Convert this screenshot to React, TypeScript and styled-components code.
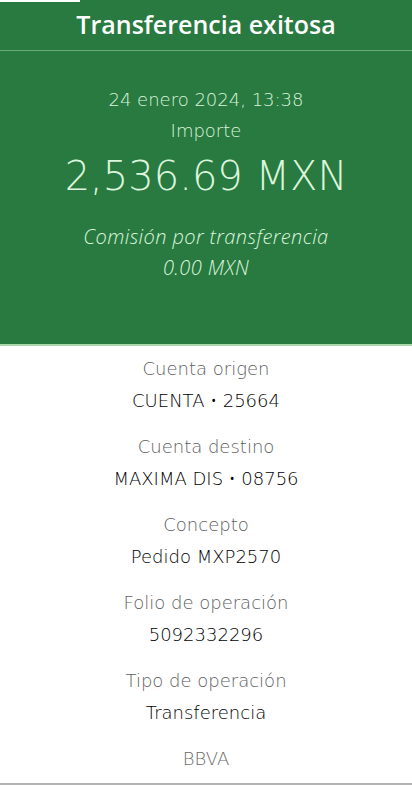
import React from 'react'
import styled, { createGlobalStyle } from 'styled-components'

const GlobalStyle = createGlobalStyle`
  html, body {
    margin: 0;
    padding: 0;
    background: #ffffff;
  }
  body {
    font-family: "DejaVu Sans", "Open Sans", sans-serif;
  }
`

const details = [
  { label: 'Cuenta origen', value: 'CUENTA • 25664' },
  { label: 'Cuenta destino', value: 'MAXIMA DIS • 08756' },
  { label: 'Concepto', value: 'Pedido MXP2570' },
  { label: 'Folio de operación', value: '5092332296' },
  { label: 'Tipo de operación', value: 'Transferencia' },
]

const App = () => {
  return (
    <>
      <GlobalStyle />
      <Screen>
        <GreenPanel>
          <TitleBar>
            <Title>Transferencia exitosa</Title>
          </TitleBar>
          <Summary>
            <DateText>24 enero 2024, 13:38</DateText>
            <SummaryLabel>Importe</SummaryLabel>
            <Amount>2,536.69 MXN</Amount>
            <Commission>
              <CommissionLine>Comisión por transferencia</CommissionLine>
              <CommissionLine>0.00 MXN</CommissionLine>
            </Commission>
          </Summary>
        </GreenPanel>
        <DetailList>
          {details.map((d) => (
            <DetailItem key={d.label}>
              <DetailLabel>{d.label}</DetailLabel>
              <DetailValue>{d.value}</DetailValue>
            </DetailItem>
          ))}
          <BankName>BBVA</BankName>
        </DetailList>
      </Screen>
    </>
  )
}

export default App

const Screen = styled.div`
  width: 412px;
  height: 785px;
  display: flex;
  flex-direction: column;
  background: #ffffff;
  border-bottom: 2px solid #b4b4b4;
  box-sizing: border-box;
  overflow: hidden;
`

const GreenPanel = styled.div`
  position: relative;
  background: #287a40;
  height: 346px;
  flex-shrink: 0;
  border-bottom: 2px solid #a9d6ac;
  box-sizing: border-box;

  &::before {
    content: '';
    position: absolute;
    left: 0;
    top: 0;
    width: 80px;
    height: 2px;
    background: #ffffff;
  }
`

const TitleBar = styled.div`
  height: 51px;
  display: flex;
  align-items: center;
  justify-content: center;
  border-bottom: 1px solid #6aab74;
  box-sizing: border-box;
`

const Title = styled.h1`
  margin: 0 0 2px 0;
  font-family: "Open Sans", sans-serif;
  font-size: 25px;
  font-weight: 650;
  color: #ffffff;
`

const Summary = styled.div`
  display: flex;
  flex-direction: column;
  align-items: center;
  padding-top: 35px;
  color: #dcf5dc;
`

const DateText = styled.div`
  font-size: 18px;
  line-height: 28px;
  font-weight: 200;
`

const SummaryLabel = styled.div`
  font-size: 18px;
  line-height: 28px;
  margin-top: 3px;
  font-weight: 200;
`

const Amount = styled.div`
  font-size: 40px;
  line-height: 48px;
  font-weight: 200;
  margin-top: 7px;
`

const Commission = styled.div`
  display: flex;
  flex-direction: column;
  align-items: center;
  margin-top: 21px;
`

const CommissionLine = styled.div`
  font-family: "Open Sans", sans-serif;
  font-size: 20px;
  line-height: 31px;
  font-style: italic;
  font-weight: 300;
  letter-spacing: 0.4px;
`

const DetailList = styled.div`
  display: flex;
  flex-direction: column;
  align-items: center;
  gap: 18px;
  padding-top: 9px;
`

const DetailItem = styled.div`
  display: flex;
  flex-direction: column;
  align-items: center;
  gap: 4px;
`

const DetailLabel = styled.div`
  font-size: 18px;
  line-height: 28px;
  font-weight: 200;
  color: #5e5e5e;
`

const DetailValue = styled.div`
  font-size: 18px;
  line-height: 28px;
  font-weight: 200;
  color: #000000;
`

const BankName = styled.div`
  font-size: 18px;
  line-height: 28px;
  font-weight: 200;
  color: #6a6a6a;
`
